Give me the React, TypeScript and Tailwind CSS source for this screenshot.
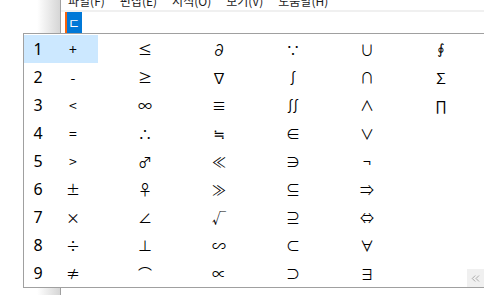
import { ChevronsLeft } from "lucide-react";

const columns: string[][] = [
  ["+", "-", "<", "=", ">", "±", "×", "÷", "≠"],
  ["≤", "≥", "∞", "∴", "♂", "♀", "∠", "⊥", "⌒"],
  ["∂", "∇", "≡", "≒", "≪", "≫", "√", "∽", "∝"],
  ["∵", "∫", "∬", "∈", "∋", "⊆", "⊇", "⊂", "⊃"],
  ["∪", "∩", "∧", "∨", "¬", "⇒", "⇔", "∀", "∃"],
  ["∮", "∑", "∏", "", "", "", "", "", ""],
];

const menus = ["파일(F)", "편집(E)", "서식(O)", "보기(V)", "도움말(H)"];

const symFont = "font-['Noto_Sans_CJK_KR','DejaVu_Sans',sans-serif]";
const altFont = "font-['DejaVu_Sans',sans-serif]";

export default function App() {
  const rows = Array.from({ length: 9 }, (_, i) => i);

  return (
    <div
      className="relative w-[484px] h-[295px] overflow-hidden bg-white flex text-black"
      style={{ fontFamily: '"Noto Sans", "Noto Sans CJK KR", sans-serif' }}
    >
      {/* desktop edge with window shadow */}
      <div className="w-[60px] h-full bg-gradient-to-r from-white from-[62%] to-[#d6d6d6]" />

      {/* notepad window */}
      <div className="flex-1 h-full border-l border-[#a0a0a0] flex flex-col">
        <div className="h-[10px] overflow-hidden flex gap-[15px] pl-[7px] text-[12px] leading-none text-[#1a1a1a]">
          {menus.map((m) => (
            <span key={m} className="-mt-[5px] font-['Noto_Sans_CJK_KR']">
              {m}
            </span>
          ))}
        </div>
        <div className="h-[2px] bg-[#f0f0f0]" />
        <div className="flex pl-[4px]">
          <div className="w-[2px] h-[21px] bg-[#f7630c]" />
          <div className="w-[15px] h-[21px] bg-[#0078d7] text-white text-[13px] leading-[21px] pl-[1px] font-['Noto_Sans_CJK_KR']">
            ㄷ
          </div>
        </div>
      </div>

      {/* IME candidate window */}
      <div className="absolute left-[23px] top-[33px] w-[462px] h-[255px] border border-[#a0a0a0] bg-white pt-px">
        {rows.map((r) => (
          <div key={r} className="flex h-[28px] items-center">
            <div
              className={`flex h-full w-[74px] items-center ${
                r === 0 ? "bg-[#cce8ff]" : ""
              }`}
            >
              <span className="w-[28px] text-center text-[16px]">{r + 1}</span>
              <span className={`w-[42px] text-center text-[14px] ${symFont}`}>
                {columns[0][r]}
              </span>
            </div>
            <div className="w-[10px]" />
            {columns.slice(1).map((col, c) => (
              <span
                key={c}
                className={`w-[74px] text-center text-[14px] ${
                  col[r] === "∮" ? altFont : symFont
                }`}
              >
                {col[r]}
              </span>
            ))}
          </div>
        ))}
        <div className="absolute right-0 bottom-0 w-[17px] h-[18px] bg-[#f0f0f0] flex items-center justify-center text-[#8a8a8a]">
          <ChevronsLeft size={13} strokeWidth={1.25} />
        </div>
      </div>
    </div>
  );
}
